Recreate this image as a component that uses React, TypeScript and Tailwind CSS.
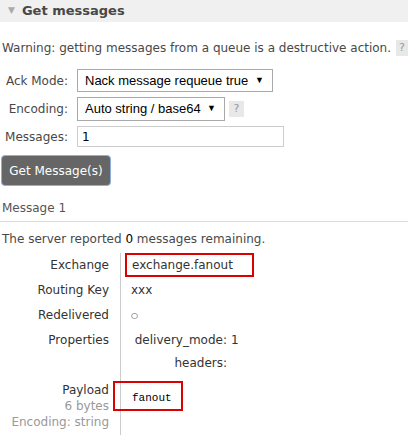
import React from "react";

const font = { fontFamily: '"DejaVu Sans", Verdana, sans-serif' };

const App: React.FC = () => {
  return (
    <div className="w-[408px] h-[435px] overflow-hidden bg-white text-[12px] text-[#484848] font-['DejaVu_Sans',Verdana,sans-serif]">
      {/* section header */}
      <div className="h-[22px] bg-[#f0f0f0] flex items-center pl-[8px]">
        <span className="text-[#aaa] text-[9px] mr-[7px]">&#9660;</span>
        <span className="font-bold text-[13px] text-[#484848]">Get messages</span>
      </div>

      <div className="mt-[17px] pl-[2px] flex items-center h-[18px]">
        <span>Warning: getting messages from a queue is a destructive action.</span>
        <span className="ml-[5px] bg-[#e8e8e8] text-[#999] text-[11px] px-[3px] leading-[16px]">?</span>
      </div>

      <div className="mt-[12px] flex flex-col gap-[5px]">
        <div className="flex items-center h-[23px]">
          <label className="w-[68px] text-right">Ack Mode:</label>
          <div className="ml-[9px] w-[196px] h-[23px] border border-[#a9a9a9] bg-white flex items-center justify-between pl-[7px] pr-[8px] text-[13px] text-black font-['Liberation_Sans',Arial,sans-serif]">
            <span>Nack message requeue true</span>
            <span className="text-[9px]">&#9660;</span>
          </div>
        </div>
        <div className="flex items-center h-[24px]">
          <label className="w-[68px] text-right">Encoding:</label>
          <div className="ml-[9px] w-[148px] h-[24px] border border-[#a9a9a9] bg-white flex items-center justify-between pl-[7px] pr-[8px] text-[13px] text-black font-['Liberation_Sans',Arial,sans-serif]">
            <span>Auto string / base64</span>
            <span className="text-[9px]">&#9660;</span>
          </div>
          <span className="ml-[4px] bg-[#e8e8e8] text-[#999] text-[11px] w-[15px] text-center leading-[16px]">?</span>
        </div>
        <div className="flex items-center h-[21px]">
          <label className="w-[68px] text-right">Messages:</label>
          <div className="ml-[9px] w-[207px] h-[21px] border border-[#ccc] bg-white flex items-center pl-[4px] text-[12px] text-black">
            1
          </div>
        </div>
      </div>

      <div className="mt-[8px] pl-[1px]">
        <button
          style={font}
          className="w-[110px] h-[31px] rounded-[4px] bg-[#666] text-white text-[12px] border border-[#8fb0d8]"
        >
          Get Message(s)
        </button>
      </div>

      <div className="mt-[13px] pl-[2px] pb-[4px] border-b border-[#ddd] text-[#555]">Message 1</div>

      <div className="mt-[8px] pl-[2px]">
        The server reported <span className="text-black">0</span> messages remaining.
      </div>

      <div className="mt-[5px] flex">
        <div className="w-[120px] flex flex-col text-right pr-[11px] text-[#333]">
          <div className="h-[25px] leading-[25px]">Exchange</div>
          <div className="h-[25px] leading-[25px]">Routing Key</div>
          <div className="h-[25px] leading-[25px]">Redelivered</div>
          <div className="h-[25px] leading-[25px]">Properties</div>
          <div className="h-[23px]"></div>
          <div className="mt-[6px] leading-[16px]">Payload</div>
          <div className="leading-[16px] text-[#999]">6 bytes</div>
          <div className="leading-[16px] text-[#999]">Encoding: string</div>
        </div>
        <div className="flex-1 border-l border-[#ccc] h-[200px] text-[#333]">
          <div className="h-[25px] pl-[4px] flex items-start">
            <span className="h-[24px] w-[129px] border-2 border-[#d00] pl-[5px] leading-[20px]">exchange.fanout</span>
          </div>
          <div className="h-[25px] leading-[25px] pl-[10px]">xxx</div>
          <div className="h-[25px] leading-[25px] pl-[10px] text-[8px]">&#9675;</div>
          <div className="h-[25px] leading-[25px] pl-[6px] flex">
            <span className="w-[100px] text-right">delivery_mode:</span>
            <span className="ml-[4px]">1</span>
          </div>
          <div className="h-[23px] leading-[20px] pl-[6px] flex">
            <span className="w-[100px] text-right">headers:</span>
          </div>
          <div className="mt-[5px] -ml-[8px] w-[70px] h-[30px] border-2 border-[#d00] pl-[17px] pt-[9px] text-[11px] text-black font-['Liberation_Mono','Courier_New',monospace] leading-[12px]">
            fanout
          </div>
        </div>
      </div>
    </div>
  );
};

export default App;
